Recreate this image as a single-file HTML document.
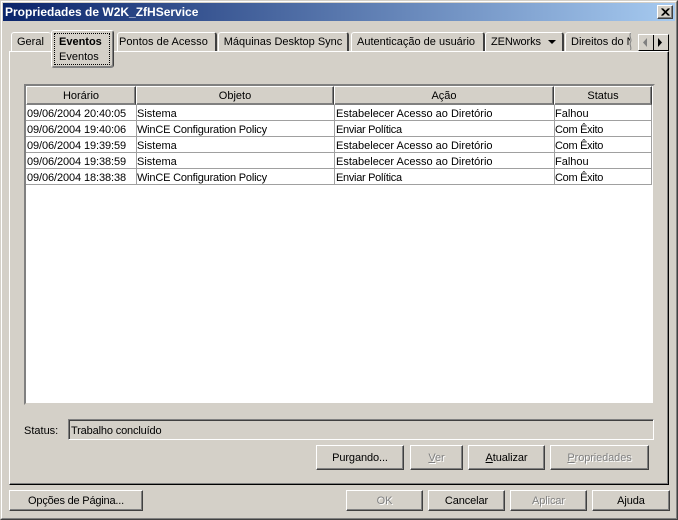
<!DOCTYPE html>
<html><head><meta charset="utf-8">
<style>
*{box-sizing:border-box}
html,body{margin:0;padding:0}
body{width:678px;height:520px;position:relative;overflow:hidden;background:#d4d0c8;font:11px "Liberation Sans",sans-serif;color:#000}
.a{position:absolute}
.t{position:absolute;white-space:nowrap;line-height:14px}
.btn{position:absolute;background:#d4d0c8;border:1px solid;border-color:#fff #404040 #404040 #fff;box-shadow:inset -1px -1px 0 #808080;text-align:center;white-space:nowrap;font-size:11px;letter-spacing:-.1px}
.btn.d{color:#808080;text-shadow:1px 1px 0 #fff}
.tab{position:absolute;top:32px;height:19px;background:#d4d0c8;border-top:1px solid #fff;border-left:1px solid #fff;border-right:2px solid #404040;border-radius:3px 3px 0 0;white-space:nowrap;line-height:18px;font-size:11px;text-align:center}
.th{position:absolute;top:86px;height:19px;background:#d4d0c8;border:1px solid;border-color:#fff #404040 #808080 #fff;box-shadow:inset -1px -1px 0 #808080;text-align:center;line-height:19px}
.h{position:absolute;left:26px;width:625px;height:1px;background:#a0a0a0}
.v{position:absolute;top:105px;height:80px;width:1px;background:#a0a0a0}
.dt{letter-spacing:-.1px}
.n{letter-spacing:-.2px}
.m{letter-spacing:-.3px}
u{text-decoration:underline}
</style></head><body>
<!-- window frame -->
<div class="a" style="left:0;top:0;width:678px;height:520px;border:1px solid;border-color:#d4d0c8 #404040 #404040 #d4d0c8"></div>
<div class="a" style="left:1px;top:1px;width:676px;height:518px;border:1px solid;border-color:#fff #808080 #808080 #fff"></div>
<!-- title -->
<div class="a" style="left:3px;top:3px;width:672px;height:18px;background:linear-gradient(90deg,#0a246a,#a6caf0)"></div>
<div class="t" style="left:5px;top:5px;color:#fff;font-weight:bold;font-size:12px">Propriedades de W2K_ZfHService</div>
<div class="btn" style="left:657px;top:5px;width:16px;height:14px"><svg width="14" height="12" style="position:absolute;left:0;top:0"><path d="M3.5 2.5L10.5 9.5M4.5 2.5L11.5 9.5M10.5 2.5L3.5 9.5M11.5 2.5L4.5 9.5" stroke="#000" stroke-width="1" fill="none"/></svg></div>
<!-- panel -->
<div class="a" style="left:9px;top:51px;width:660px;height:434px;background:#d4d0c8;border:1px solid;border-color:#fff #000 #000 #fff;box-shadow:inset -1px -1px 0 #808080"></div>
<!-- tabs -->
<div class="tab" style="left:11px;width:40px;border-right:none;text-align:left;padding-left:5px">Geral</div>
<div class="tab" style="left:117px;width:100px;text-align:left;padding-left:1px;letter-spacing:.05px">Pontos de Acesso</div>
<div class="tab" style="left:218px;width:131px;">Máquinas Desktop Sync</div>
<div class="tab" style="left:351px;width:134px;text-align:left;padding-left:5px">Autenticação de usuário</div>
<div class="tab" style="left:485px;width:79px;text-align:left;padding-left:5px;letter-spacing:-.1px">ZENworks<svg width="9" height="5" style="position:absolute;left:62px;top:7px"><path d="M0 0H8L4 4Z" fill="#000"/></svg></div>
<div class="tab" style="left:565px;width:67px;border-right:none;text-align:left;padding-left:5px;overflow:hidden">Direitos do N</div>
<div class="a" style="left:630px;top:33px;width:3px;height:17px;background:#d4d0c8"></div>
<svg class="a" style="left:628px;top:33px" width="5" height="17"><path d="M2.5 0C0.5 4 4.5 6 2.5 9C1 12 4 14 2.5 17" stroke="#808080" fill="none"/></svg>
<!-- tab scroll buttons -->
<div class="a" style="left:638px;top:34px;width:31px;height:17px;background:#d4d0c8;border:1px solid #000;border-color:#fff #000 #000 #fff"></div>
<div class="a" style="left:653px;top:35px;width:1px;height:15px;background:#000"></div>
<svg class="a" style="left:641px;top:38px" width="26" height="10"><path d="M6 0V9L2 4.5Z" fill="#808080"/><path d="M17 0V9L21 4.5Z" fill="#000"/></svg>
<!-- active tab -->
<div class="a" style="left:51px;top:30px;width:63px;height:38px;background:#d4d0c8;border:1px solid;border-color:#fff #404040 #808080 #fff;border-radius:3px;box-shadow:inset -1px -1px 0 #808080"></div>
<div class="a" style="left:54px;top:33px;width:56px;height:32px;border:1px dotted #000"></div>
<div class="t" style="left:59px;top:35px;font-weight:bold">Eventos</div>
<div class="t" style="left:59px;top:50px">Eventos</div>
<!-- table -->
<div class="a" style="left:24px;top:84px;width:631px;height:321px;background:#fff;border:2px solid;border-color:#808080 #d4d0c8 #d4d0c8 #808080"></div>
<div class="th" style="left:26px;width:110px">Horário</div>
<div class="th" style="left:136px;width:198px">Objeto</div>
<div class="th" style="left:334px;width:220px">Ação</div>
<div class="th" style="left:554px;width:98px">Status</div>
<div class="h" style="top:120px"></div>
<div class="h" style="top:136px"></div>
<div class="h" style="top:152px"></div>
<div class="h" style="top:168px"></div>
<div class="h" style="top:184px"></div>
<div class="v" style="left:136px"></div>
<div class="v" style="left:334px"></div>
<div class="v" style="left:554px"></div>
<div class="v" style="left:651px"></div>

<div class="t dt" style="left:27px;top:107px">09/06/2004 20:40:05</div><div class="t" style="left:137px;top:107px">Sistema</div><div class="t" style="left:336px;top:107px">Estabelecer Acesso ao Diretório</div><div class="t" style="left:555px;top:107px">Falhou</div>
<div class="t dt" style="left:27px;top:123px">09/06/2004 19:40:06</div><div class="t n" style="left:137px;top:123px">WinCE Configuration Policy</div><div class="t m" style="left:336px;top:123px">Enviar Política</div><div class="t m" style="left:555px;top:123px">Com Êxito</div>
<div class="t dt" style="left:27px;top:139px">09/06/2004 19:39:59</div><div class="t" style="left:137px;top:139px">Sistema</div><div class="t" style="left:336px;top:139px">Estabelecer Acesso ao Diretório</div><div class="t m" style="left:555px;top:139px">Com Êxito</div>
<div class="t dt" style="left:27px;top:155px">09/06/2004 19:38:59</div><div class="t" style="left:137px;top:155px">Sistema</div><div class="t" style="left:336px;top:155px">Estabelecer Acesso ao Diretório</div><div class="t" style="left:555px;top:155px">Falhou</div>
<div class="t dt" style="left:27px;top:171px">09/06/2004 18:38:38</div><div class="t n" style="left:137px;top:171px">WinCE Configuration Policy</div><div class="t m" style="left:336px;top:171px">Enviar Política</div><div class="t m" style="left:555px;top:171px">Com Êxito</div>
<!-- status -->
<div class="t" style="left:24px;top:424px">Status:</div>
<div class="a" style="left:68px;top:419px;width:586px;height:21px;background:#d4d0c8;border:1px solid;border-color:#808080 #fff #fff #808080;box-shadow:inset 1px 1px 0 #404040"></div>
<div class="t" style="left:71px;top:424px;letter-spacing:-.15px">Trabalho concluído</div>
<!-- buttons -->
<div class="btn" style="left:316px;top:445px;width:88px;height:25px;line-height:25px">Purgando...</div>
<div class="btn d" style="left:410px;top:445px;width:53px;height:25px;line-height:25px"><u>V</u>er</div>
<div class="btn" style="left:468px;top:445px;width:77px;height:25px;line-height:25px"><u>A</u>tualizar</div>
<div class="btn d" style="left:550px;top:445px;width:99px;height:25px;line-height:25px"><u>P</u>ropriedades</div>
<div class="btn" style="left:9px;top:490px;width:134px;height:21px;line-height:21px;letter-spacing:-.2px">Opções de Pá<u>g</u>ina...</div>
<div class="btn d" style="left:346px;top:490px;width:77px;height:21px;line-height:21px">OK</div>
<div class="btn" style="left:428px;top:490px;width:77px;height:21px;line-height:21px">Cancelar</div>
<div class="btn d" style="left:510px;top:490px;width:77px;height:21px;line-height:21px">Aplicar</div>
<div class="btn" style="left:592px;top:490px;width:78px;height:21px;line-height:21px">A<u>j</u>uda</div>
</body></html>
